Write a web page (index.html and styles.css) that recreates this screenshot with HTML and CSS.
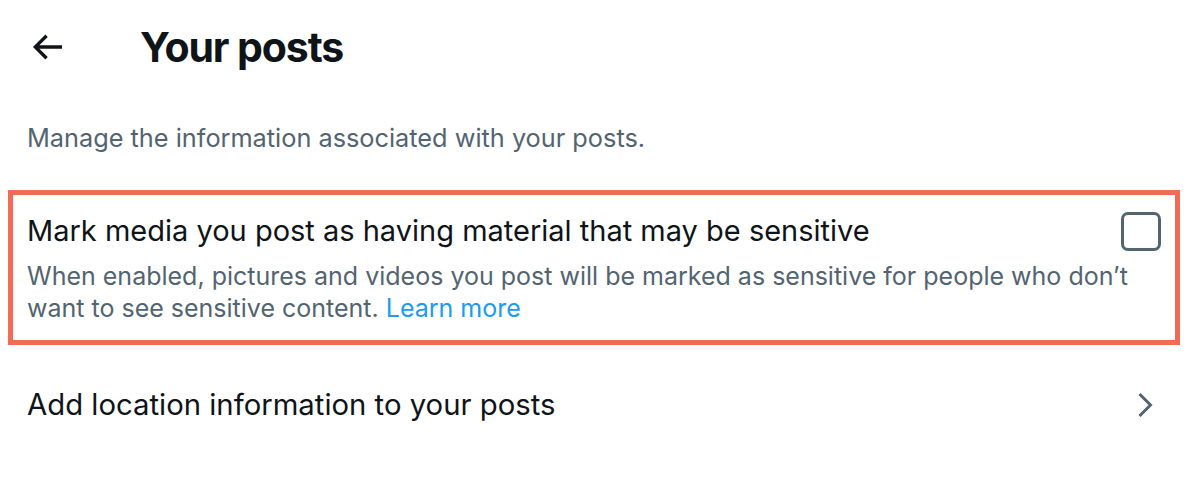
FILE: index.html
```html
<!DOCTYPE html>
<html lang="en">
<head>
<meta charset="utf-8">
<title>Your posts</title>
<link rel="stylesheet" href="styles.css">
</head>
<body>
<header class="header">
  <span class="back" aria-label="Back">
    <svg viewBox="0 0 24 24" width="40" height="40"><path d="M7.414 13l5.043 5.04-1.414 1.42L3.586 12l7.457-7.46 1.414 1.42L7.414 11H21v2H7.414z" fill="#0f1419"/></svg>
  </span>
  <h1 class="title">Your posts</h1>
</header>
<p class="intro">Manage the information associated with your posts.</p>
<section class="option">
  <div class="option-head">
    <div class="option-title">Mark media you post as having material that may be sensitive</div>
    <span class="checkbox"></span>
  </div>
  <div class="option-desc">When enabled, pictures and videos you post will be marked as sensitive for people who don’t want to see sensitive content. <a class="link" href="#">Learn more</a></div>
</section>
<div class="row">
  <span class="row-label">Add location information to your posts</span>
  <svg class="chevron" viewBox="0 0 20 30" width="20" height="30"><polyline points="3.5,4 14.5,15 3.5,26" fill="none" stroke="#536471" stroke-width="3"/></svg>
</div>
</body>
</html>
```
FILE: styles.css
```css
* { box-sizing: border-box; }
body {
  margin: 0;
  background: #ffffff;
  font-family: Inter, "Noto Sans", sans-serif;
  color: #0f1419;
}
.header {
  display: flex;
  align-items: center;
  height: 94px;
  padding-left: 27px;
}
.back {
  display: flex;
  width: 40px;
  height: 40px;
}
.title {
  margin: 0 0 0 73px;
  font-size: 41px;
  line-height: 48px;
  font-weight: 700;
  letter-spacing: -1.1px;
}
.intro {
  margin: 28px 0 0;
  padding: 0 27px;
  font-size: 25.3px;
  line-height: 32px;
  color: #536471;
}
.option {
  margin: 36px 10px 0 8px;
  border: 5px solid #f46b55;
  padding: 20px 14px 16px 14px;
}
.option-head {
  display: flex;
  align-items: flex-start;
  justify-content: space-between;
  gap: 20px;
  margin-bottom: 13px;
}
.option-title {
  font-size: 29px;
  line-height: 32px;
}
.option-desc {
  font-size: 25px;
  line-height: 32px;
  color: #536471;
}
.link {
  color: #1d9bf0;
  text-decoration: none;
}
.checkbox {
  flex: none;
  width: 40px;
  height: 39px;
  margin-top: -3px;
  margin-bottom: -7px;
  border: 3px solid #536471;
  border-radius: 7px;
}
.row {
  display: flex;
  align-items: center;
  justify-content: space-between;
  padding: 44px 34px 44px 27px;
}
.row-label {
  font-size: 29.3px;
  line-height: 32px;
}
.chevron {
  display: block;
}
```
